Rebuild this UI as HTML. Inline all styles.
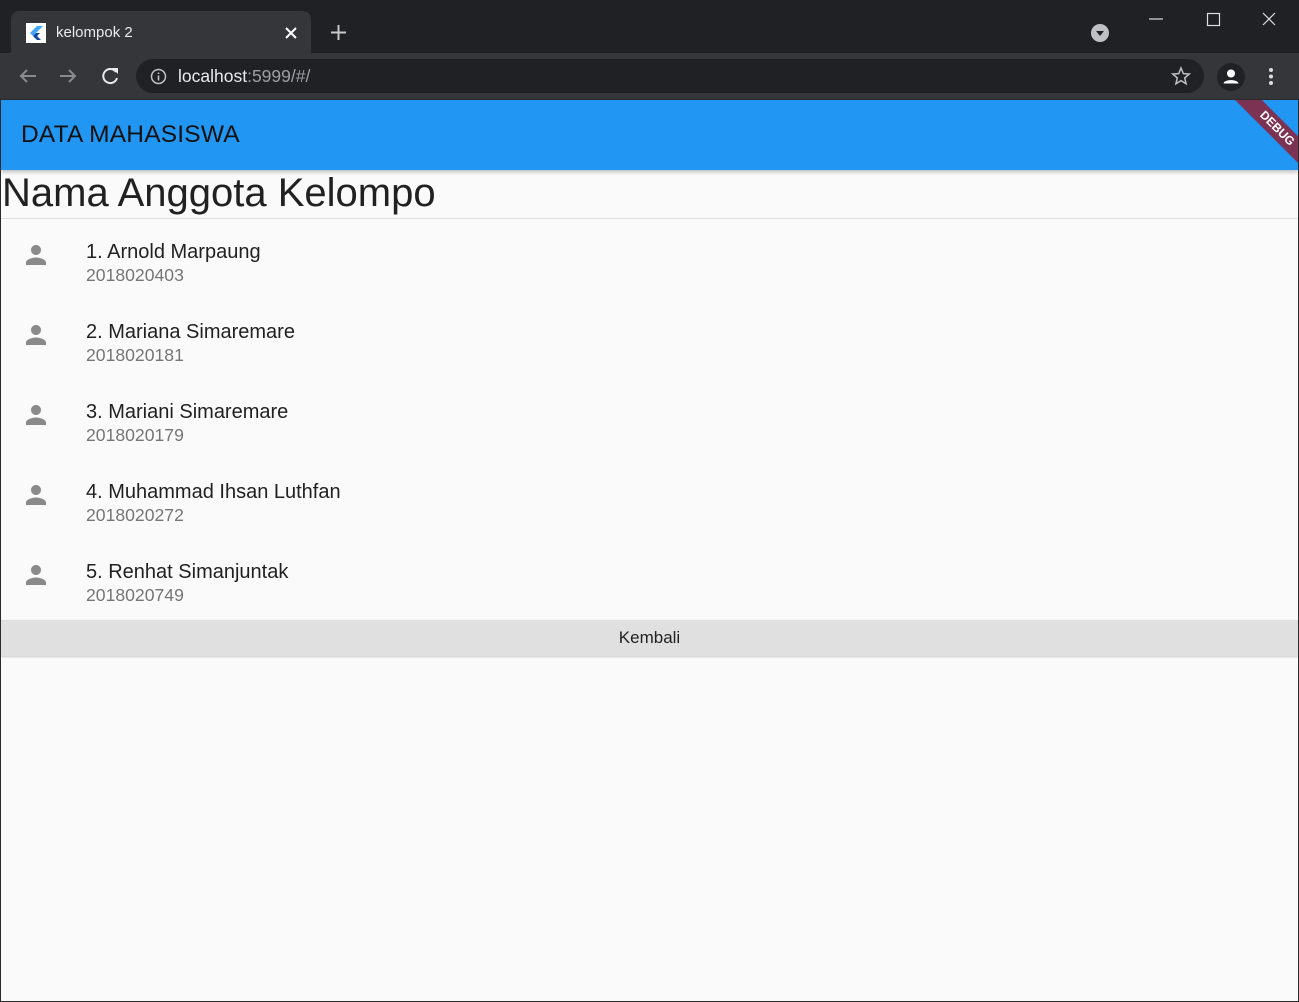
<!DOCTYPE html>
<html><head><meta charset="utf-8"><style>
*{margin:0;padding:0;box-sizing:border-box}
body{width:1299px;height:1002px;overflow:hidden;background:#202124;font-family:"Liberation Sans",sans-serif;position:relative}
.abs{position:absolute}
.tab{left:11px;top:11px;width:300px;height:43px;background:#35363a;border-radius:8px 8px 0 0}
.toolbar{left:0;top:53px;width:1299px;height:47px;background:#35363a}
.omni{left:136px;top:59px;width:1068px;height:34px;background:#202124;border-radius:17px}
.page{left:1px;top:100px;width:1297px;height:901px;background:#fafafa;overflow:hidden}
.appbar{left:0;top:0;width:1297px;height:70px;background:#2196f3;box-shadow:0 2px 4px rgba(0,0,0,.25)}
.item .t{position:absolute;left:85px;font-size:20px;color:#212121;white-space:nowrap}
.item .s{position:absolute;left:85px;font-size:17.6px;color:#757575;white-space:nowrap}
.item svg{position:absolute;left:20px;top:20px}
</style></head><body>
<div class="abs tab"></div>
<div class="abs" style="left:26px;top:23px;width:20px;height:20px;background:#fff"></div>
<svg class="abs" style="left:26px;top:23px" width="20" height="20"><path d="M11 3 L4 10 L7 13 L17 3Z" fill="#42a5f5"/><path d="M10 10 L7 13 L11 17 L15 17 L11 13 L14 10Z" fill="#0d47a1"/></svg>
<div class="abs" style="left:56px;top:24px;color:#e8eaed;font-size:15px">kelompok 2</div>
<svg class="abs" style="left:284px;top:26px" width="14" height="14"><path d="M2 2L12 12M12 2L2 12" stroke="#fff" stroke-width="2"/></svg>
<svg class="abs" style="left:330px;top:24px" width="17" height="17"><path d="M8.5 1V16M1 8.5H16" stroke="#c8c8c8" stroke-width="2"/></svg>
<svg class="abs" style="left:1090px;top:23px" width="20" height="20"><circle cx="10" cy="10" r="9" fill="#bdc1c6"/><path d="M6 8H14L10 13Z" fill="#202124"/></svg>
<svg class="abs" style="left:1145px;top:10px" width="140" height="20"><path d="M4 9H18" stroke="#ddd" stroke-width="1.2"/><rect x="62.5" y="3.5" width="12" height="12" fill="none" stroke="#ddd" stroke-width="1.2"/><path d="M118 3L130 15M130 3L118 15" stroke="#ddd" stroke-width="1.2"/></svg>
<div class="abs toolbar"></div>
<svg class="abs" style="left:18px;top:66px" width="110" height="20"><path d="M18 10H3M9 4L3 10L9 16" stroke="#8a8b8e" stroke-width="2" fill="none"/><path d="M42 10H57M51 4L57 10L51 16" stroke="#8a8b8e" stroke-width="2" fill="none"/><path d="M98 6A7 7 0 1 0 99 12" stroke="#e8eaed" stroke-width="2" fill="none"/><path d="M94 2L100 2L100 8Z" fill="#e8eaed"/></svg>
<div class="abs omni"></div>
<svg class="abs" style="left:150px;top:68px" width="17" height="17"><circle cx="8.5" cy="8.5" r="7" stroke="#bdc1c6" stroke-width="1.5" fill="none"/><path d="M8.5 7.5V12.5M8.5 4.5V6" stroke="#bdc1c6" stroke-width="1.6"/></svg>
<div class="abs" style="left:178px;top:66px;font-size:17.5px;color:#e8eaed">localhost<span style="color:#9aa0a6">:5999/#/</span></div>
<svg class="abs" style="left:1171px;top:66px" width="20" height="20"><path d="M10 2L12.3 7.6L18.3 8L13.7 11.9L15.1 17.8L10 14.6L4.9 17.8L6.3 11.9L1.7 8L7.7 7.6Z" fill="none" stroke="#bdc1c6" stroke-width="1.5"/></svg>
<svg class="abs" style="left:1216px;top:62px" width="30" height="30"><circle cx="15" cy="15" r="14" fill="#202124"/><circle cx="15" cy="11.5" r="4" fill="#fff"/><path d="M7.5 21.5C8 17 22 17 22.5 21.5Z" fill="#fff"/></svg>
<svg class="abs" style="left:1268px;top:67px" width="6" height="20"><circle cx="3" cy="3" r="2" fill="#ddd"/><circle cx="3" cy="9.5" r="2" fill="#ddd"/><circle cx="3" cy="16" r="2" fill="#ddd"/></svg>
<div class="abs" style="left:0;top:99px;width:1299px;height:903px;background:#2a2a2a"></div>
<div class="abs page">
 <div class="abs appbar"></div>
 <div class="abs" style="left:20px;top:21px;font-size:24.5px;color:#111;letter-spacing:0.2px">DATA MAHASISWA</div>
 <div class="abs" style="left:1217px;top:0;width:80px;height:80px;overflow:hidden">
  <div style="position:absolute;left:-6px;top:19px;width:130px;height:19px;background:#7c3253;transform:rotate(45deg);color:#fff;font-size:12px;font-weight:bold;text-align:center;line-height:19px">DEBUG</div>
 </div>
 <div class="abs" style="left:1px;top:71px;font-size:40px;color:#212121;white-space:nowrap">Nama Anggota Kelompo</div>
 <div class="abs" style="left:0;top:118px;width:1297px;height:1px;background:#e0e0e0"></div>
 <div class="abs" style="left:0;top:520px;width:1297px;height:36px;background:#e0e0e0;box-shadow:0 1px 2px rgba(0,0,0,.2)"></div>
 <div class="abs" style="left:0;top:528px;width:1297px;text-align:center;font-size:17px;color:#222">Kembali</div>
 <div class="item abs" style="left:0;top:120px;width:1297px;height:80px">
  <svg width="30" height="30" viewBox="0 0 24 24"><path fill="#8a8a8a" d="M12 12c2.21 0 4-1.79 4-4s-1.79-4-4-4-4 1.79-4 4 1.79 4 4 4zm0 2c-2.67 0-8 1.34-8 4v2h16v-2c0-2.66-5.33-4-8-4z"/></svg>
  <div class="t" style="top:21px">1. Arnold Marpaung</div><div class="s" style="top:45px">2018020403</div></div>
 <div class="item abs" style="left:0;top:200px;width:1297px;height:80px">
  <svg width="30" height="30" viewBox="0 0 24 24"><path fill="#8a8a8a" d="M12 12c2.21 0 4-1.79 4-4s-1.79-4-4-4-4 1.79-4 4 1.79 4 4 4zm0 2c-2.67 0-8 1.34-8 4v2h16v-2c0-2.66-5.33-4-8-4z"/></svg>
  <div class="t" style="top:21px">2. Mariana Simaremare</div><div class="s" style="top:45px">2018020181</div></div>
 <div class="item abs" style="left:0;top:280px;width:1297px;height:80px">
  <svg width="30" height="30" viewBox="0 0 24 24"><path fill="#8a8a8a" d="M12 12c2.21 0 4-1.79 4-4s-1.79-4-4-4-4 1.79-4 4 1.79 4 4 4zm0 2c-2.67 0-8 1.34-8 4v2h16v-2c0-2.66-5.33-4-8-4z"/></svg>
  <div class="t" style="top:21px">3. Mariani Simaremare</div><div class="s" style="top:45px">2018020179</div></div>
 <div class="item abs" style="left:0;top:360px;width:1297px;height:80px">
  <svg width="30" height="30" viewBox="0 0 24 24"><path fill="#8a8a8a" d="M12 12c2.21 0 4-1.79 4-4s-1.79-4-4-4-4 1.79-4 4 1.79 4 4 4zm0 2c-2.67 0-8 1.34-8 4v2h16v-2c0-2.66-5.33-4-8-4z"/></svg>
  <div class="t" style="top:21px">4. Muhammad Ihsan Luthfan</div><div class="s" style="top:45px">2018020272</div></div>
 <div class="item abs" style="left:0;top:440px;width:1297px;height:80px">
  <svg width="30" height="30" viewBox="0 0 24 24"><path fill="#8a8a8a" d="M12 12c2.21 0 4-1.79 4-4s-1.79-4-4-4-4 1.79-4 4 1.79 4 4 4zm0 2c-2.67 0-8 1.34-8 4v2h16v-2c0-2.66-5.33-4-8-4z"/></svg>
  <div class="t" style="top:21px">5. Renhat Simanjuntak</div><div class="s" style="top:45px">2018020749</div></div>
</div>
</body></html>
